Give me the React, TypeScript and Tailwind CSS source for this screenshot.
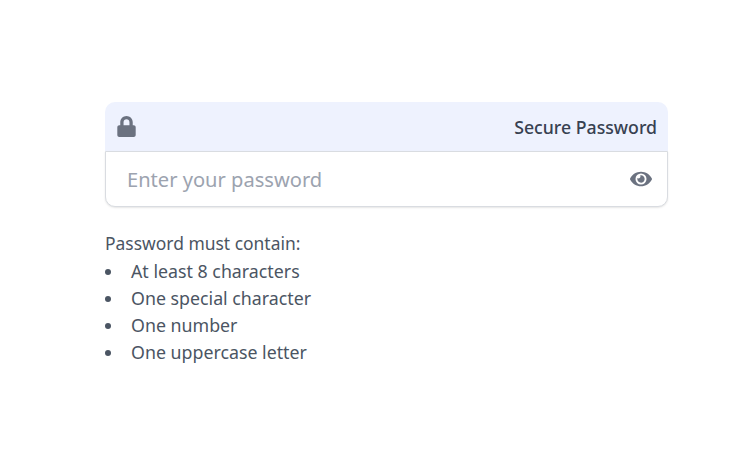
import { FaEye, FaLock } from "react-icons/fa";

const rules = ["At least 8 characters", "One special character", "One number", "One uppercase letter"];

export default function App() {
  return (
    <div className="h-[469px] w-[750px] bg-white px-[105px] pt-[102px] font-['Noto_Sans',sans-serif]">
      <div className="w-[563px]">
        <div className="flex h-[49px] items-center justify-between rounded-t-[10px] bg-[#eef2fe] pl-[11px] pr-[11px]">
          <FaLock className="h-[21px] w-[21px] text-[#6b7280]" />
          <span className="pt-[2px] text-[17.7px] font-medium text-[#374151]">Secure Password</span>
        </div>
        <div className="flex h-[56px] items-center justify-between rounded-b-[10px] border border-[#d9dce1] bg-white pl-[21px] pr-[15px] shadow-[0_1px_2px_rgba(0,0,0,0.1)]">
          <span className="pt-[2px] text-[20.1px] text-[#9ca3af]">Enter your password</span>
          <FaEye className="h-[22px] w-[22px] text-[#6b7280]" />
        </div>
      </div>
      <div className="mt-[23px] text-[17.45px] leading-[27px] text-[#4b5563]">
        <p className="mb-[1px]">Password must contain:</p>
        <ul>
          {rules.map((rule) => (
            <li key={rule} className="flex items-center">
              <span className="h-[6px] w-[6px] rounded-full bg-[#4b5563]" />
              <span className="ml-[20px] text-[17.8px]">{rule}</span>
            </li>
          ))}
        </ul>
      </div>
    </div>
  );
}
